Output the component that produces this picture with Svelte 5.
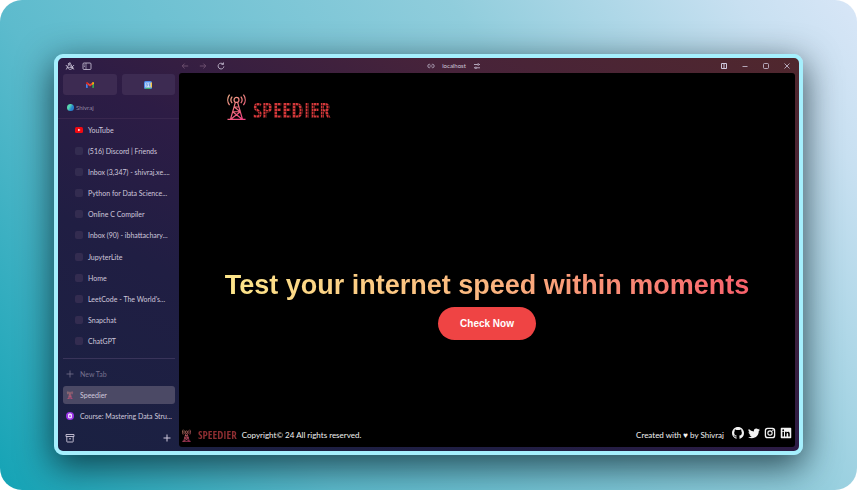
<script>
  const tabs = [
    'YouTube',
    '(516) Discord | Friends',
    'Inbox (3,347) - shivraj.xe....',
    'Python for Data Science...',
    'Online C Compiler',
    'Inbox (90) - ibhattachary...',
    'JupyterLite',
    'Home',
    "LeetCode - The World's...",
    'Snapchat',
    'ChatGPT'
  ];

  const socials = [
    {
      name: 'GitHub',
      d: 'M8 0C3.58 0 0 3.58 0 8c0 3.54 2.29 6.53 5.47 7.59.4.07.55-.17.55-.38 0-.19-.01-.82-.01-1.49-2.01.37-2.53-.49-2.69-.94-.09-.23-.48-.94-.82-1.13-.28-.15-.68-.52-.01-.53.63-.01 1.08.58 1.23.82.72 1.21 1.87.87 2.33.66.07-.52.28-.87.51-1.07-1.78-.2-3.64-.89-3.64-3.95 0-.87.31-1.59.82-2.15-.08-.2-.36-1.02.08-2.12 0 0 .67-.21 2.2.82.64-.18 1.32-.27 2-.27s1.36.09 2 .27c1.53-1.04 2.2-.82 2.2-.82.44 1.1.16 1.92.08 2.12.51.56.82 1.27.82 2.15 0 3.07-1.87 3.75-3.65 3.95.29.25.54.73.54 1.48 0 1.07-.01 1.93-.01 2.2 0 .21.15.46.55.38A8.01 8.01 0 0 0 16 8c0-4.42-3.58-8-8-8z'
    },
    {
      name: 'Twitter',
      d: 'M5.026 15c6.038 0 9.341-5.003 9.341-9.334 0-.14 0-.282-.006-.422A6.685 6.685 0 0 0 16 3.542a6.658 6.658 0 0 1-1.889.518 3.301 3.301 0 0 0 1.447-1.817 6.533 6.533 0 0 1-2.087.793A3.286 3.286 0 0 0 7.875 6.03a9.325 9.325 0 0 1-6.767-3.429 3.289 3.289 0 0 0 1.018 4.382A3.323 3.323 0 0 1 .64 6.575v.045a3.288 3.288 0 0 0 2.632 3.218 3.203 3.203 0 0 1-.865.115 3.23 3.23 0 0 1-.614-.057 3.283 3.283 0 0 0 3.067 2.277A6.588 6.588 0 0 1 .78 13.58a6.32 6.32 0 0 1-.78-.045A9.344 9.344 0 0 0 5.026 15z'
    },
    {
      name: 'Instagram',
      d: 'M4.8 1h6.4A3.8 3.8 0 0 1 15 4.800v6.400A3.800 3.800 0 0 1 11.200 15H4.800A3.800 3.800 0 0 1 1 11.200V4.800A3.800 3.800 0 0 1 4.800 1zm.2 1.700A2.300 2.300 0 0 0 2.700 5v6A2.300 2.300 0 0 0 5 13.300h6a2.300 2.300 0 0 0 2.300-2.300V5A2.300 2.300 0 0 0 11 2.700zm3 1.700a3.600 3.600 0 1 1 0 7.200 3.600 3.600 0 0 1 0-7.200zm0 1.500a2.100 2.100 0 1 0 0 4.200 2.100 2.100 0 0 0 0-4.200zM11.800 3.400a.9.9 0 1 1 0 1.800.9.900 0 0 1 0-1.800z'
    },
    {
      name: 'LinkedIn',
      d: 'M1 2a1 1 0 0 1 1-1h12a1 1 0 0 1 1 1v12a1 1 0 0 1-1 1H2a1 1 0 0 1-1-1zm2.200 4.300v6.400h2.100V6.300zM4.250 3a1.200 1.200 0 1 0 0 2.400 1.200 1.200 0 0 0 0-2.400zM6.700 6.300v6.400h2.100V9.500c0-1.800 2.100-1.900 2.100 0v3.200H13V8.900c0-3.100-3.200-3.400-4.200-1.600v-1z'
    }
  ];
</script>

{#snippet tower(id)}
  <svg class="tower" viewBox="0 0 20 28" fill="none" stroke="url(#{id})" stroke-width="1.300" aria-hidden="true">
    <defs>
      <linearGradient {id} x1="0" y1="0" x2="20" y2="28" gradientUnits="userSpaceOnUse">
        <stop offset="0" stop-color="#f7b88e" />
        <stop offset=".5" stop-color="#ee707c" />
        <stop offset="1" stop-color="#f03a83" />
      </linearGradient>
    </defs>
    <circle cx="10" cy="6.500" r="2.600" />
    <path d="M5.500 3a5.500 5.500 0 0 0 0 7M14.500 3a5.500 5.500 0 0 1 0 7M2.700 1a9 9 0 0 0 0 11M17.300 1a9 9 0 0 1 0 11M.5 27h19M8.800 9.200 3.700 27M11.200 9.200l5.100 17.800M7.600 14h4.800M6 19h8M7.600 14l6.400 5M14 19 4 27M6 19l10 8" />
  </svg>
{/snippet}

<main class="stage">
  <div class="window">
    <aside>
      <div class="sidehead">
        <button aria-label="Arc menu">
          <svg viewBox="0 0 10 10" fill="none" stroke="currentColor" stroke-width=".8"><path d="M1.200 8.500 4.800 1.500l4 7M1 4c1 3.500 6 3.500 8 0M2.500 6c1 3.500 4.500 3 5.500 0M3 2l5 6" /></svg>
        </button>
        <button aria-label="Toggle sidebar">
          <svg viewBox="0 0 10 10" fill="none" stroke="currentColor" stroke-width=".8"><rect x="1" y="2" width="8" height="6.500" rx="1" /><path d="M4 2v6.500M2 4h1M2 5.500h1" stroke-width=".6" /></svg>
        </button>
      </div>

      <div class="pins">
        <button aria-label="Gmail">
          <svg class="gmail" viewBox="0 0 24 18"><path fill="#4285f4" d="M0 3v13q0 2 2 2h3V7z" /><path fill="#34a853" d="M19 7v11h3q2 0 2-2V3z" /><path fill="#ea4335" d="m3 0 9 7 9-7v7l-9 6.500L3 7z" /><path fill="#c5221f" d="M0 3q0-3 3-3l2 1.500V9L0 5z" /><path fill="#fbbc04" d="M24 3q0-3-3-3l-2 1.500V9l5-4z" /></svg>
        </button>
        <button aria-label="Calendar">
          <svg class="calendar" viewBox="0 0 16 16"><rect width="16" height="16" rx="3" fill="#4a8ef0" /><path d="M13 3h3v10h-3z" fill="#f6c33c" /><path d="M3 13h10v3H3z" fill="#40b26a" /><rect x="2.500" y="3" width="10.500" height="10" fill="#cfe2fa" /><path d="M4 6q3-2 3 0T5 8q4 1 0 3M9 6l2-1v6" fill="none" stroke="#3b78dc" stroke-width="1.300" /></svg>
        </button>
      </div>

      <div class="profile"><span class="globe"></span>Shivraj</div>

      <nav class="tabs" aria-label="Pinned tabs">
        {#each tabs as tab, i}
          <a href="#top">
            {#if i === 0}
              <svg class="favicon" viewBox="0 0 8 8" aria-hidden="true"><rect y="1" width="8" height="6" rx="1.500" fill="#f20a12" /><path d="m3.200 2.700 2.300 1.300-2.300 1.300z" fill="#fff" /></svg>
            {:else}
              <span class="favicon blank"></span>
            {/if}
            <span class="label">{tab}</span>
          </a>
        {/each}
      </nav>

      <div class="open">
        <button class="row new">
          <svg viewBox="0 0 8 8" stroke="currentColor" stroke-width=".8"><path d="M4 .5v7M.5 4h7" /></svg>New Tab
        </button>
        <a class="row active" href="#top">{@render tower('tab-tower')}Speedier</a>
        <a class="row" href="#top">
          <svg viewBox="0 0 8 8" aria-hidden="true"><circle cx="4" cy="4" r="4" fill="#9a35e8" /><path d="M2.700 2.200h2.600v3.600H2.700z" fill="none" stroke="#fff" /><path d="M4 1.500v2" stroke="#fff" stroke-width=".8" /></svg>
          <span class="label">Course: Mastering Data Stru...</span>
        </a>
      </div>

      <div class="sidefoot">
        <button aria-label="Archive">
          <svg viewBox="0 0 10 10" fill="none" stroke="currentColor" stroke-width=".9"><path d="M1 1.500h8v2H1zM1.800 3.500v5q0 .5.500.5h5.400q.5 0 .5-.5v-5M4 5.800h2" /></svg>
        </button>
        <button aria-label="Add">
          <svg viewBox="0 0 10 10" stroke="currentColor"><path d="M5 1.500v7M1.500 5h7" /></svg>
        </button>
      </div>
    </aside>

    <section class="browser">
      <div class="toolbar">
        <div class="group">
          <button class="dim" aria-label="Back"><svg viewBox="0 0 10 10" fill="none" stroke="currentColor"><path d="M9 5H2M4.500 2 1.500 5l3 3" /></svg></button>
          <button class="dim" aria-label="Forward"><svg viewBox="0 0 10 10" fill="none" stroke="currentColor"><path d="M1 5h7M5.500 2l3 3-3 3" /></svg></button>
          <button aria-label="Reload"><svg viewBox="0 0 10 10" fill="none" stroke="currentColor"><path d="M8.600 5.500A3.600 3.600 0 1 1 7.700 2.700M5.500 3h2.600V.6" /></svg></button>
        </div>
        <div class="address">
          <svg viewBox="0 0 8 8" fill="none" stroke="currentColor" stroke-width=".7"><path d="M3.200 2.300H2.500a1.700 1.700 0 0 0 0 3.400h.7M4.800 2.300h.7a1.700 1.700 0 0 1 0 3.400h-.7M2.600 4h2.800" /></svg>
          <span>localhost</span>
          <svg viewBox="0 0 8 8" fill="none" stroke="currentColor" stroke-width=".8"><path d="M1 2.500h3.200M6.200 2.500H7M1 5.800h1M4 5.800h3" /><circle cx="5.200" cy="2.500" r=".8" /><circle cx="2.900" cy="5.800" r=".8" /></svg>
        </div>
        <div class="group controls">
          <button aria-label="Split view"><svg viewBox="0 0 8 8" fill="none" stroke="currentColor"><path d="M1.500 1.500h5v5h-5zM4 1.500v5" /></svg></button>
          <button aria-label="Minimize"><svg viewBox="0 0 8 8" stroke="currentColor"><path d="M1.500 4.500h5" stroke-width=".8" /></svg></button>
          <button aria-label="Maximize"><svg viewBox="0 0 8 8" fill="none" stroke="currentColor" stroke-width=".8"><rect x="1.500" y="1.500" width="5" height="5" rx="1" /></svg></button>
          <button aria-label="Close"><svg viewBox="0 0 8 8" stroke="currentColor" stroke-width=".8"><path d="m1.500 1.500 5 5m0-5-5 5" /></svg></button>
        </div>
      </div>

      <div class="page">
        <header>{@render tower('header-tower')}<span class="brand">SPEEDIER</span></header>
        <div class="hero">
          <h1>Test your internet speed within moments</h1>
          <button class="cta">Check Now</button>
        </div>
        <footer>
          {@render tower('footer-tower')}
          <span class="brand">SPEEDIER</span>
          <span>Copyright© 24 All rights reserved.</span>
          <span class="credit">Created with <span class="heart">♥</span> by Shivraj</span>
          <div class="socials">
            {#each socials as s}
              <a href="#top" aria-label={s.name}><svg viewBox="0 0 16 16" fill="currentColor" fill-rule="evenodd"><path d={s.d} /></svg></a>
            {/each}
          </div>
        </footer>
      </div>
    </section>
  </div>
</main>

<style>
  :global(body) {
    background: #fff;
  }
  * {
    box-sizing: border-box;
  }
  svg {
    display: block;
    flex: none;
  }
  button {
    border: 0;
    padding: 0;
    background: none;
    color: inherit;
    font: inherit;
    cursor: pointer;
  }
  a {
    color: inherit;
    text-decoration: none;
  }
  .stage {
    display: flex;
    min-height: 100vh;
    padding: 54px 54px 35px;
    border-radius: 22px;
    background: linear-gradient(55deg, #14a3b5 0%, #5dbbcd 28%, #90cddc 66%, #c8e0f1 90%, #d8e6f7 100%);
    font-family: Lato, 'Open Sans', sans-serif;
  }
  .window {
    display: flex;
    flex: 1;
    min-width: 0;
    border: 4px solid #a5effd;
    border-radius: 9px;
    background: linear-gradient(to top right, #1a2142 0%, #201e43 30%, #2d1c45 50%, #47233a 75%, #50272d 100%);
    box-shadow: 0 10px 34px 2px rgb(0 20 30 / 68%);
    color: #cfc8dc;
    font-size: 7px;
    line-height: 10px;
  }
  aside {
    display: flex;
    flex-direction: column;
    flex: none;
    width: 121px;
  }
  .sidehead {
    display: flex;
    align-items: center;
    gap: 7px;
    height: 16px;
    padding: 0 7px;
  }
  .sidehead svg,
  .sidefoot svg {
    width: 10px;
    height: 10px;
  }
  .pins {
    display: flex;
    gap: 5px;
    padding: 0 4px 0 5px;
  }
  .pins button {
    display: flex;
    flex: 1;
    align-items: center;
    justify-content: center;
    height: 21px;
    border-radius: 3px;
    background: #3d2b52;
  }
  .gmail {
    width: 8px;
    height: 6px;
  }
  .calendar {
    width: 8px;
    height: 8px;
  }
  .profile {
    display: flex;
    align-items: center;
    gap: 2px;
    height: 24px;
    padding: 2px 9px 0;
    border-bottom: 1px solid #39274e;
    color: #9389a4;
    font-size: 6px;
  }
  .globe {
    width: 7px;
    height: 7px;
    border-radius: 50%;
    background: linear-gradient(120deg, #56d6b0 35%, #2783cf 65%);
  }
  .tabs {
    display: grid;
    flex: 1;
    grid-auto-rows: 1fr;
  }
  .tabs a {
    display: flex;
    align-items: center;
    gap: 5px;
    min-height: 18px;
    padding: 0 4px 0 17px;
  }
  .favicon {
    flex: none;
    width: 8px;
    height: 8px;
  }
  .blank {
    border-radius: 2px;
    background: #332c50;
  }
  .label {
    white-space: nowrap;
  }
  .open {
    display: flex;
    flex-direction: column;
    gap: 3px;
    margin: 6px 4px 0 5px;
    padding-top: 6px;
    border-top: 1px solid #39345a;
  }
  .row {
    display: flex;
    align-items: center;
    gap: 6px;
    height: 18px;
    padding: 0 3px;
    border-radius: 3px;
  }
  .row svg {
    width: 8px;
    height: 8px;
  }
  .new {
    color: #77718e;
  }
  .active {
    background: #4b4965;
  }
  .sidefoot {
    display: flex;
    align-items: center;
    justify-content: space-between;
    height: 26px;
    padding: 0 7px;
  }
  .browser {
    display: flex;
    flex-direction: column;
    flex: 1;
    min-width: 0;
    padding: 0 4px 4px 0;
  }
  .toolbar {
    display: grid;
    grid-template-columns: 1fr auto 1fr;
    align-items: center;
    height: 15px;
  }
  .group {
    display: flex;
    gap: 10px;
    padding: 0 2px;
  }
  .group svg,
  .address svg {
    width: 8px;
    height: 8px;
  }
  .group button {
    width: 8px;
  }
  .dim {
    color: #7a5a78;
  }
  .controls {
    justify-content: flex-end;
    gap: 13px;
    padding: 0 4px;
  }
  .address {
    display: flex;
    align-items: center;
    gap: 7px;
    margin-right: 66px;
    font-size: 6px;
  }
  .page {
    display: flex;
    flex-direction: column;
    flex: 1;
    border-radius: 3px;
    background: #000;
    color: #f2f2f2;
  }
  header {
    display: flex;
    align-items: flex-end;
    gap: 7px;
    padding: 20px 48px 0;
  }
  header .tower {
    width: 19px;
    height: 28px;
  }
  .brand {
    font-family: 'Noto Sans ExtraCondensed', 'Open Sans Condensed', 'Roboto Condensed', 'DejaVu Sans Mono', monospace;
    font-size: 22px;
    font-weight: 700;
    line-height: 24px;
    color: transparent;
    background:
      repeating-linear-gradient(90deg, rgb(0 0 0 / 50%) 0 1px, transparent 1px 3px),
      repeating-linear-gradient(0deg, rgb(0 0 0 / 50%) 0 1px, transparent 1px 3px),
      #d4383a;
    background-clip: text;
  }
  .hero {
    display: flex;
    flex: 1;
    flex-direction: column;
    align-items: center;
    justify-content: center;
    gap: 6px;
    padding-top: 64px;
  }
  h1 {
    margin: 0;
    font: 700 27px/32px 'Liberation Sans', sans-serif;
    color: transparent;
    background: linear-gradient(90deg, #fde68a, #fbb67f 50%, #f8616b);
    background-clip: text;
  }
  .cta {
    padding: 10px 22px;
    border-radius: 17px;
    background: #ef4444;
    color: #fff;
    font: 700 10px/13px 'Liberation Sans', sans-serif;
  }
  footer {
    display: flex;
    align-items: center;
    gap: 5px;
    height: 24px;
    padding: 0 3px;
    font-size: 8px;
  }
  footer .tower {
    width: 9px;
    height: 13px;
  }
  footer .brand {
    margin-left: 2px;
    font-size: 11px;
    line-height: 12px;
    background: #8e2d31;
    background-clip: text;
  }
  .credit {
    margin-left: auto;
  }
  .socials {
    display: flex;
    gap: 4px;
    margin: 0 0 4px 3px;
  }
  .socials svg {
    width: 12px;
    height: 12px;
  }
</style>
